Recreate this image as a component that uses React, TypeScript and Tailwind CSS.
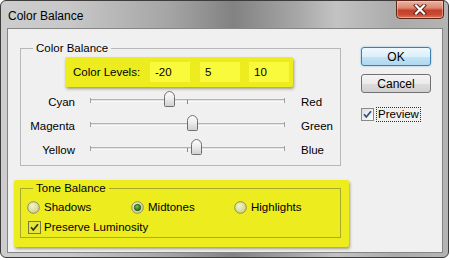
import React from "react";

function Thumb() {
  return (
    <svg width="11" height="16" viewBox="0 0 11 16" className="block">
      <defs>
        <linearGradient id="thumbg" x1="0" y1="0" x2="0" y2="1">
          <stop offset="0" stopColor="#fdfdfd" />
          <stop offset="0.45" stopColor="#eeeeee" />
          <stop offset="1" stopColor="#cfcfcf" />
        </linearGradient>
      </defs>
      <path
        d="M0.5 14.5 V5.5 C0.5 3 3 0.5 5.5 0.5 C8 0.5 10.5 3 10.5 5.5 V14.5 Q10.5 15.5 9.5 15.5 H1.5 Q0.5 15.5 0.5 14.5 Z"
        fill="url(#thumbg)"
        stroke="#6f6f6f"
      />
    </svg>
  );
}

function SliderRow({ left, right, value }: { left: string; right: string; value: number }) {
  const pos = 92 + (value / 100) * 92;
  return (
    <div className="flex h-[24px] items-center">
      <div className="w-[54px] text-right">{left}</div>
      <div className="relative mb-[6px] ml-[15px] h-[16px] w-[195px]">
        <div className="mt-[8px] h-[3px] border-t border-b border-t-[#b4b4b4] border-b-[#fafafa] bg-[#e2e2e2]" />
        <div className="absolute left-0 top-[7px] h-[5px] w-px bg-[#a0a0a0]" />
        <div className="absolute right-0 top-[7px] h-[5px] w-px bg-[#a0a0a0]" />
        <div className="absolute left-[97px] top-[9px] h-[4px] w-px bg-[#8a8a8a]" />
        <div className="absolute top-0" style={{ left: `${pos}px` }}>
          <Thumb />
        </div>
      </div>
      <div className="ml-[16px]">{right}</div>
    </div>
  );
}

function Radio({ checked }: { checked?: boolean }) {
  return (
    <svg width="13" height="13" viewBox="0 0 13 13" className="block">
      <defs>
        <radialGradient id="radg" cx="0.4" cy="0.35" r="0.7">
          <stop offset="0" stopColor="#f4f4c4" />
          <stop offset="1" stopColor="#cfcf86" />
        </radialGradient>
        <radialGradient id="radc" cx="0.4" cy="0.35" r="0.7">
          <stop offset="0" stopColor="#74c05a" />
          <stop offset="1" stopColor="#1f5e16" />
        </radialGradient>
      </defs>
      <circle cx="6.5" cy="6.5" r="5.8" fill="url(#radg)" stroke="#8e8e5c" strokeWidth="1" />
      {checked && <circle cx="6.5" cy="6.5" r="3.2" fill="url(#radc)" stroke="#1a4612" strokeWidth="0.7" />}
    </svg>
  );
}

function Check({ yellow }: { yellow?: boolean }) {
  return (
    <svg width="13" height="13" viewBox="0 0 13 13" className="block">
      <defs>
        <linearGradient id="chkg" x1="0" y1="0" x2="1" y2="1">
          <stop offset="0" stopColor="#dcdcdc" />
          <stop offset="1" stopColor="#ffffff" />
        </linearGradient>
      </defs>
      <rect
        x="0.5"
        y="0.5"
        width="12"
        height="12"
        fill={yellow ? "#e6e63a" : "url(#chkg)"}
        stroke={yellow ? "#7c7c3a" : "#8a8a8a"}
      />
      <path
        d="M3 6.3 L5.3 9 L10 3.3"
        fill="none"
        stroke={yellow ? "#2d2d10" : "#2f4b8c"}
        strokeWidth="1.7"
      />
    </svg>
  );
}

function CloseGlyph() {
  return (
    <svg width="14" height="11" viewBox="0 0 14 11" className="block">
      <path d="M3 1.5 L11 9.5 M11 1.5 L3 9.5" stroke="#5a1c12" strokeWidth="4" strokeLinecap="square" />
      <path d="M3 1.5 L11 9.5 M11 1.5 L3 9.5" stroke="#ffffff" strokeWidth="2.2" strokeLinecap="square" />
    </svg>
  );
}

export default function App() {
  return (
    <div className="h-[260px] w-[450px] bg-white font-['Liberation_Sans',Arial,sans-serif] text-[11.5px] leading-[14px] text-black">
      <div className="flex h-[258px] w-[449px] flex-col rounded-[6px] border border-[#3c3c3c] bg-[linear-gradient(90deg,#cdcdcd_0%,#c8c8c8_15%,#a4a4a4_38%,#828282_52%,#a6a6a6_66%,#c3c3c3_75%,#ababab_88%,#b4b4b4_100%)] pl-[6px] pr-[5px] pb-[4px]">
        <div className="flex h-[27px] items-start justify-between">
          <div className="pl-[1px] pt-[8px] text-[12px]">Color Balance</div>
          <div className="-mr-[1px] -mt-px flex h-[19px] w-[48px] items-center justify-center rounded-b-[4px] border border-[#5e261b] bg-[linear-gradient(180deg,#eab3a4_0%,#dc8a72_40%,#c4402a_55%,#c84a32_80%,#de7a5c_100%)] shadow-[inset_0_0_0_1px_rgba(255,220,200,0.45)]">
            <CloseGlyph />
          </div>
        </div>
        <div className="flex flex-1 border border-[#858585] bg-[#f0f0f0]">
          <div className="ml-[6px] w-[335px]">
            <fieldset className="ml-[6px] mt-[12px] w-[321px] border border-[#b8b8b8] pb-[3px]">
              <legend className="ml-[12px] px-[3px]">Color Balance</legend>
              <div className="ml-[44px] mt-[2px] flex h-[30px] w-[228px] items-center rounded-[2px] bg-[#ecec1f] pl-[8px] shadow-[1px_2px_3px_rgba(60,60,0,0.45)]">
                <div className="w-[77px]">Color Levels:</div>
                <div className="flex h-[20px] w-[40px] items-center bg-[#fafa3c] pl-[5px]">-20</div>
                <div className="ml-[10px] flex h-[20px] w-[40px] items-center bg-[#fafa3c] pl-[5px]">5</div>
                <div className="ml-[9px] flex h-[20px] w-[40px] items-center bg-[#fafa3c] pl-[5px]">10</div>
              </div>
              <div className="mt-[3px]">
                <SliderRow left="Cyan" right="Red" value={-20} />
                <SliderRow left="Magenta" right="Green" value={5} />
                <SliderRow left="Yellow" right="Blue" value={10} />
              </div>
            </fieldset>
            <div className="mt-[14px] rounded-[2px] bg-[#ecec1f] pb-[9px] pl-[6px] pr-[8px] pt-[1px] shadow-[1px_2px_3px_rgba(60,60,0,0.45)]">
              <fieldset className="border border-[#a8a82a] pb-[3px]">
                <legend className="ml-[12px] px-[3px]">Tone Balance</legend>
                <div className="mt-[5px] flex h-[14px] items-center pl-[6px]">
                  <div className="flex w-[104px] items-center gap-[4px]">
                    <Radio />
                    <span>Shadows</span>
                  </div>
                  <div className="flex w-[103px] items-center gap-[4px]">
                    <Radio checked />
                    <span>Midtones</span>
                  </div>
                  <div className="flex items-center gap-[4px]">
                    <Radio />
                    <span>Highlights</span>
                  </div>
                </div>
                <div className="mt-[6px] flex h-[14px] items-center gap-[3px] pl-[7px]">
                  <Check yellow />
                  <span>Preserve Luminosity</span>
                </div>
              </fieldset>
            </div>
          </div>
          <div className="ml-[12px] mt-[18px] w-[70px]">
            <div className="flex h-[19px] items-center justify-center rounded-[3px] border border-[#3c7fb1] bg-[linear-gradient(180deg,#eef8fd_0%,#dcf0fb_50%,#c2e4f6_51%,#b0d8ef_100%)] text-[12px] shadow-[0_0_2px_rgba(60,160,220,0.7)]">
              OK
            </div>
            <div className="mt-[8px] flex h-[19px] items-center justify-center rounded-[3px] border border-[#707070] bg-[linear-gradient(180deg,#f4f4f4_0%,#ebebeb_50%,#dddddd_51%,#d0d0d0_100%)] text-[12px]">
              Cancel
            </div>
            <div className="mt-[14px] flex h-[15px] items-center gap-[2px]">
              <Check />
              <span className="border border-dotted border-[#333] px-[1px] leading-[13px]">Preview</span>
            </div>
          </div>
        </div>
      </div>
    </div>
  );
}
